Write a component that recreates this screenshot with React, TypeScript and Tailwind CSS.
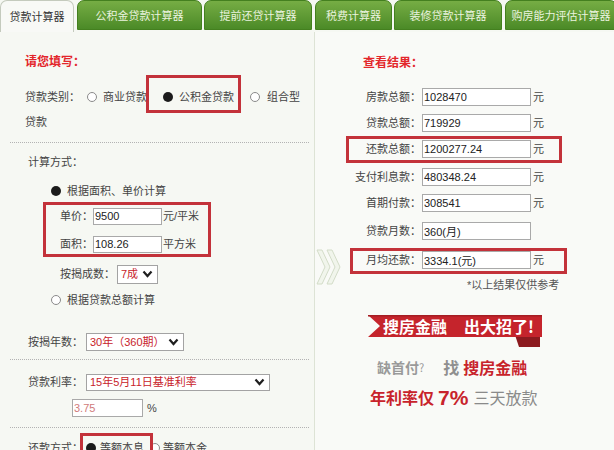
import React from "react";

const Radio = ({ checked }: { checked?: boolean }) =>
  checked ? (
    <span className="inline-block w-[10px] h-[10px] rounded-full bg-[#1b1b1b] shrink-0" />
  ) : (
    <span className="inline-block w-[10px] h-[10px] rounded-full border border-[#8a8a8a] bg-white shrink-0" />
  );

const Chevron = () => (
  <svg width="11" height="8" viewBox="0 0 11 8" className="shrink-0">
    <polyline points="1.5,1.5 5.5,6 9.5,1.5" fill="none" stroke="#1f1f1f" strokeWidth="2.2" />
  </svg>
);

const Box = ({ value, w, h, red }: { value: string; w: string; h: string; red?: boolean }) => (
  <input
    readOnly
    value={value}
    className={`${w} ${h} border border-[#a9a9a9] bg-white pl-[1px] text-[11px] leading-none outline-none ${
      red ? "text-[#d07a7a]" : "text-[#222]"
    }`}
  />
);

const Select = ({ label, w, h }: { label: string; w: string; h: string }) => (
  <div className={`${w} ${h} border border-[#a3a3a3] bg-white flex items-center justify-between pl-[3px] pr-[4px] text-[11px] text-[#c8232b]`}>
    <span>{label}</span>
    <Chevron />
  </div>
);

const Dotted = () => <div className="ml-[10px] mr-[5px] border-t border-dotted border-[#b3b3b3]" />;

const GreenTab = ({ label, cls }: { label: string; cls: string }) => (
  <div
    className={`${cls} h-[30px] shrink-0 rounded-t-[7px] border border-[#44801f] bg-linear-to-b from-[#76ad44] to-[#4b8a27] flex items-center justify-center pt-[3px] text-[11px] text-[#eaf3df]`}
  >
    {label}
  </div>
);

const ResultRow = ({
  label,
  value,
  unit = true,
  mt,
  box,
}: {
  label: string;
  value: string;
  unit?: boolean;
  mt: string;
  box?: string;
}) => (
  <div className={`${mt} h-[18px] shrink-0 flex items-center relative`}>
    <span className="w-[106px] text-right">{label}</span>
    <span className="ml-[1px]">
      <Box value={value} w="w-[109px]" h="h-[18px]" />
    </span>
    {unit && <span className="ml-[2px]">元</span>}
    {box && <div className={`absolute ${box} border-[3px] border-[#c3323a]`} />}
  </div>
);

export default function App() {
  return (
    <div className="w-[614px] h-[450px] overflow-hidden bg-[#f6f8f3] font-['Liberation_Sans','Noto_Sans_CJK_SC',sans-serif] text-[#444] leading-none">
      {/* Tabs */}
      <div className="flex h-[32px] items-start overflow-hidden">
        <div className="w-[74px] h-[32px] shrink-0 rounded-t-[7px] border border-b-0 border-[#c4cabd] bg-[#f8f9f6] flex items-center justify-center pt-[2px] text-[11px] text-[#333]">
          贷款计算器
        </div>
        <GreenTab cls="ml-[3px] w-[125px]" label="公积金贷款计算器" />
        <GreenTab cls="ml-[2px] w-[108px]" label="提前还贷计算器" />
        <GreenTab cls="ml-[3px] w-[77px]" label="税费计算器" />
        <GreenTab cls="ml-[2px] w-[108px]" label="装修贷款计算器" />
        <GreenTab cls="ml-[3px] w-[112px]" label="购房能力评估计算器" />
      </div>

      {/* Body */}
      <div className="flex">
        {/* Left panel */}
        <div className="w-[315px] shrink-0 border-r border-[#dde3d5] flex flex-col pb-[20px] text-[11px] text-[#444]">
          <div className="mt-[20px] h-[20px] shrink-0 flex items-center pl-[25px] text-[12px] font-bold text-[#e3262b]">
            请您填写：
          </div>
          <div className="mt-[15px] h-[20px] shrink-0 flex items-center pl-[25px] relative">
            <span>贷款类别：</span>
            <span className="ml-[7px] flex">
              <Radio />
            </span>
            <span className="ml-[6px]">商业贷款</span>
            <span className="ml-[16px] flex">
              <Radio checked />
            </span>
            <span className="ml-[6px]">公积金贷款</span>
            <span className="ml-[16px] flex">
              <Radio />
            </span>
            <span className="ml-[7px]">组合型</span>
            <div className="absolute left-[146px] top-[-12px] w-[95px] h-[38px] border-[3px] border-[#c3323a]" />
          </div>
          <div className="mt-[5px] h-[20px] shrink-0 flex items-center pl-[25px]">贷款</div>
          <div className="mt-[10px] shrink-0">
            <Dotted />
          </div>
          <div className="mt-[9px] h-[20px] shrink-0 flex items-center pl-[28px]">计算方式：</div>
          <div className="mt-[9px] h-[20px] shrink-0 flex items-center pl-[51px]">
            <Radio checked />
            <span className="ml-[6px]">根据面积、单价计算</span>
          </div>
          <div className="mt-[1px] ml-[43px] w-[168px] h-[55px] shrink-0 border-[3px] border-[#c3323a] flex flex-col">
            <div className="mt-[1px] h-[20px] shrink-0 flex items-center pl-[14px]">
              <span>单价：</span>
              <Box value="9500" w="w-[69px]" h="h-[17px]" />
              <span className="ml-[1px]">元/平米</span>
            </div>
            <div className="mt-[8px] h-[20px] shrink-0 flex items-center pl-[14px]">
              <span>面积：</span>
              <Box value="108.26" w="w-[69px]" h="h-[17px]" />
              <span className="ml-[1px]">平方米</span>
            </div>
          </div>
          <div className="mt-[7px] h-[20px] shrink-0 flex items-center pl-[60px]">
            <span>按揭成数：</span>
            <span className="ml-[2px]">
              <Select label="7成" w="w-[41px]" h="h-[19px]" />
            </span>
          </div>
          <div className="mt-[6px] h-[20px] shrink-0 flex items-center pl-[51px]">
            <Radio />
            <span className="ml-[6px]">根据贷款总额计算</span>
          </div>
          <div className="mt-[22px] h-[20px] shrink-0 flex items-center pl-[28px]">
            <span>按揭年数：</span>
            <span className="ml-[3px]">
              <Select label="30年（360期）" w="w-[98px]" h="h-[18px]" />
            </span>
          </div>
          <div className="mt-[7px] shrink-0">
            <Dotted />
          </div>
          <div className="mt-[12px] h-[20px] shrink-0 flex items-center pl-[28px]">
            <span>贷款利率：</span>
            <span className="ml-[3px]">
              <Select label="15年5月11日基准利率" w="w-[184px]" h="h-[17px]" />
            </span>
          </div>
          <div className="mt-[7px] h-[18px] shrink-0 flex items-center pl-[72px]">
            <Box value="3.75" w="w-[71px]" h="h-[18px]" red />
            <span className="ml-[4px]">%</span>
          </div>
          <div className="mt-[10px] shrink-0">
            <Dotted />
          </div>
          <div className="mt-[10px] h-[20px] shrink-0 flex items-center pl-[28px] relative">
            <span>还款方式：</span>
            <span className="ml-[3px] flex">
              <Radio checked />
            </span>
            <span className="ml-[4px]">等额本息</span>
            <span className="ml-[6px] flex">
              <Radio />
            </span>
            <span className="ml-[3px]">等额本金</span>
            <div className="absolute left-[80px] top-[-5px] w-[73px] h-[30px] border-[3px] border-[#c3323a]" />
          </div>
        </div>

        {/* Right panel */}
        <div className="flex-1 relative flex flex-col bg-[#f9faf7] text-[11px] text-[#444]">
          <svg className="absolute left-[1px] top-[217px]" width="26" height="36" viewBox="0 0 26 36">
            <polygon points="1,1 6,1 14,18 6,35 1,35 9,18" fill="#f1f5ec" stroke="#d3dcc8" strokeWidth="1" />
            <polygon points="11,1 16,1 24,18 16,35 11,35 19,18" fill="#f1f5ec" stroke="#d3dcc8" strokeWidth="1" />
          </svg>
          <div className="mt-[21px] h-[20px] shrink-0 flex items-center pl-[48px] text-[12px] font-bold text-[#e3262b]">
            查看结果：
          </div>
          <ResultRow mt="mt-[15px]" label="房款总额：" value="1028470" />
          <ResultRow mt="mt-[8px]" label="贷款总额：" value="719929" />
          <ResultRow
            mt="mt-[8px]"
            label="还款总额："
            value="1200277.24"
            box="left-[31px] top-[-4px] w-[216px] h-[27px]"
          />
          <ResultRow mt="mt-[10px]" label="支付利息款：" value="480348.24" />
          <ResultRow mt="mt-[8px]" label="首期付款：" value="308541" />
          <ResultRow mt="mt-[10px]" label="贷款月数：" value="360(月)" unit={false} />
          <ResultRow
            mt="mt-[11px]"
            label="月均还款："
            value="3334.1(元)"
            box="left-[35px] top-[-3px] w-[217px] h-[26px]"
          />
          <div className="mt-[7px] h-[18px] shrink-0 flex items-center pl-[152px] text-[#555]">*以上结果仅供参考</div>

          {/* Ad */}
          <div className="mt-[21px] ml-[53px] w-[174px] h-[32px] shrink-0 relative">
            <svg className="absolute inset-0" width="174" height="32" viewBox="0 0 174 32">
              <polygon points="147,20 172,20 172,32 151,32" fill="#8c1a1f" />
              <polygon points="0,0 174,0 174,22 0,22 12,11" fill="#c5242c" />
              <rect x="0" y="0" width="174" height="1.5" fill="#a51d23" />
            </svg>
            <div className="relative h-[22px] flex items-center pl-[15px] text-[16px] font-bold text-white font-['Noto_Sans_CJK_SC',sans-serif]">
              <span>搜房金融</span>
              <span className="ml-[17px]">出大招了!</span>
            </div>
          </div>
          <div className="mt-[10px] h-[20px] shrink-0 flex items-center pl-[62px] font-bold font-['Noto_Sans_CJK_SC',sans-serif]">
            <span className="text-[14px] text-[#9a9a9a]">缺首付</span>
            <span className="text-[11px] text-[#9a9a9a] font-normal">?</span>
            <span className="ml-[19px] text-[16px] text-[#8f8f8f]">找</span>
            <span className="ml-[4px] text-[16px] text-[#c8232b]">搜房金融</span>
          </div>
          <div className="mt-[9px] h-[22px] shrink-0 flex items-center pl-[55px] font-['Noto_Sans_CJK_SC',sans-serif]">
            <span className="text-[16px] font-bold text-[#c8232b]">年利率仅</span>
            <span className="ml-[4px] text-[21px] font-bold text-[#c8232b] font-['Liberation_Sans',sans-serif]">7%</span>
            <span className="ml-[5px] text-[16px] text-[#8a8a8a]">三天放款</span>
          </div>
        </div>
      </div>
    </div>
  );
}
